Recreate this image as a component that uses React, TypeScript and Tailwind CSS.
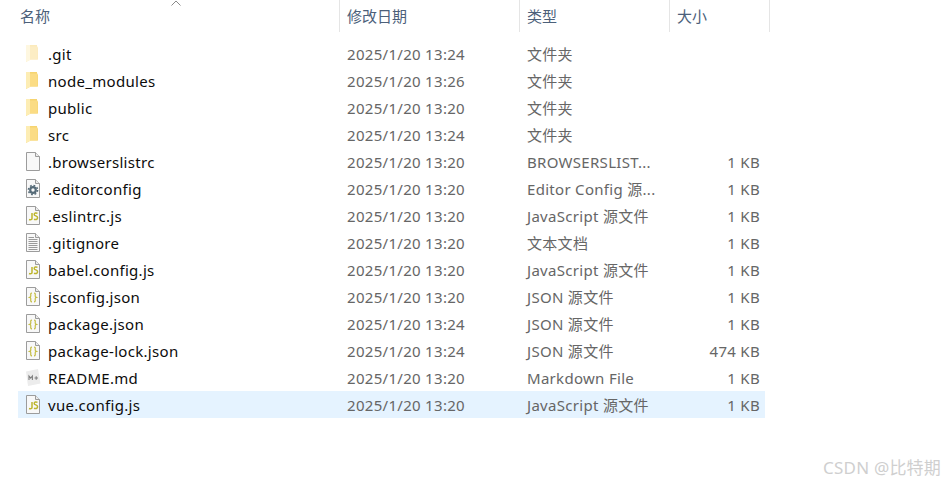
const font = "font-['Noto_Sans','Noto_Sans_CJK_SC',sans-serif]";

type Kind = "folder" | "folderFaded" | "blank" | "config" | "js" | "text" | "json" | "md";

interface FileRow {
  name: string;
  date: string;
  type: string;
  size: string;
  kind: Kind;
  selected?: boolean;
}

const rows: FileRow[] = [
  { name: ".git", date: "2025/1/20 13:24", type: "文件夹", size: "", kind: "folderFaded" },
  { name: "node_modules", date: "2025/1/20 13:26", type: "文件夹", size: "", kind: "folder" },
  { name: "public", date: "2025/1/20 13:20", type: "文件夹", size: "", kind: "folder" },
  { name: "src", date: "2025/1/20 13:24", type: "文件夹", size: "", kind: "folder" },
  { name: ".browserslistrc", date: "2025/1/20 13:20", type: "BROWSERSLIST...", size: "1 KB", kind: "blank" },
  { name: ".editorconfig", date: "2025/1/20 13:20", type: "Editor Config 源...", size: "1 KB", kind: "config" },
  { name: ".eslintrc.js", date: "2025/1/20 13:20", type: "JavaScript 源文件", size: "1 KB", kind: "js" },
  { name: ".gitignore", date: "2025/1/20 13:20", type: "文本文档", size: "1 KB", kind: "text" },
  { name: "babel.config.js", date: "2025/1/20 13:20", type: "JavaScript 源文件", size: "1 KB", kind: "js" },
  { name: "jsconfig.json", date: "2025/1/20 13:20", type: "JSON 源文件", size: "1 KB", kind: "json" },
  { name: "package.json", date: "2025/1/20 13:24", type: "JSON 源文件", size: "1 KB", kind: "json" },
  { name: "package-lock.json", date: "2025/1/20 13:24", type: "JSON 源文件", size: "474 KB", kind: "json" },
  { name: "README.md", date: "2025/1/20 13:20", type: "Markdown File", size: "1 KB", kind: "md" },
  { name: "vue.config.js", date: "2025/1/20 13:20", type: "JavaScript 源文件", size: "1 KB", kind: "js", selected: true },
];

const Sheet = ({ children }: { children?: React.ReactNode }) => (
  <svg width="16" height="19" viewBox="0 0 16 19" fill="none">
    <path d="M1.5 0.5H10.5L14.5 4.5V18.5H1.5Z" fill="#f8f8f8" stroke="#9c9c9c" />
    <path d="M10.5 0.5V4.5H14.5" fill="#ececec" stroke="#9c9c9c" />
    {children}
  </svg>
);

const FileIcon = ({ kind }: { kind: Kind }) => {
  if (kind === "folder" || kind === "folderFaded") {
    const faded = kind === "folderFaded";
    return (
      <svg width="16" height="19" viewBox="0 0 16 19">
        <path d="M1 1H12V2.5L13 4V15.5H5.5L1 18Z" fill={faded ? "#fbeabb" : "#f6d470"} />
        <path d="M5 2.5H12.5V15.5H5Z" fill={faded ? "#fcedc4" : "#fbdc84"} />
        <path d="M1 1H5V16L1 18Z" fill={faded ? "#fef7e0" : "#fdedb4"} />
      </svg>
    );
  }
  if (kind === "blank") return <Sheet />;
  if (kind === "config") {
    return (
      <Sheet>
        <circle cx="8" cy="11" r="2.8" fill="none" stroke="#566b78" strokeWidth="2.2" />
        <circle cx="8" cy="11" r="4.6" fill="none" stroke="#566b78" strokeWidth="1.5" strokeDasharray="1.8 1.8" />
      </Sheet>
    );
  }
  if (kind === "js") {
    return (
      <Sheet>
        <path d="M7 7V12.5C7 13.7 5.6 14 4 13.5" stroke="#bdb52e" strokeWidth="1.5" />
        <path d="M12.5 7.4C11.2 6.7 9.2 6.9 9.2 8.4C9.2 10.2 12.6 9.6 12.6 11.8C12.6 13.7 10.6 13.9 9 13.2" stroke="#bdb52e" strokeWidth="1.5" />
      </Sheet>
    );
  }
  if (kind === "json") {
    return (
      <Sheet>
        <path d="M7 6C5.2 6 5.8 8 5.8 9C5.8 10 4.6 10.4 4.6 10.4C4.6 10.4 5.8 10.8 5.8 11.8C5.8 12.8 5.2 14.8 7 14.8" stroke="#c4bd45" strokeWidth="1.2" />
        <path d="M9 6C10.8 6 10.2 8 10.2 9C10.2 10 11.4 10.4 11.4 10.4C11.4 10.4 10.2 10.8 10.2 11.8C10.2 12.8 10.8 14.8 9 14.8" stroke="#c4bd45" strokeWidth="1.2" />
      </Sheet>
    );
  }
  if (kind === "text") {
    return (
      <Sheet>
        <path d="M3.5 4.5H9M3.5 6.5H12.5M3.5 8.5H12.5M3.5 10.5H12.5M3.5 12.5H12.5M3.5 14.5H12.5M3.5 16.5H12.5" stroke="#9a9a9a" />
      </Sheet>
    );
  }
  return (
    <svg width="16" height="19" viewBox="0 0 16 19">
      <path d="M1 3.5L13 1L15.5 15.5L3 18Z" fill="#ececec" />
      <path d="M4 12V8L5.7 10.2L7.4 8V12M9.5 10H13M11.2 8.2V11.8" fill="none" stroke="#7f7f7f" strokeWidth="1.1" />
    </svg>
  );
};

const Row = ({ row }: { row: FileRow }) => (
  <div className={`flex h-[27px] w-[747px] items-center tracking-[0.3px] ${row.selected ? "bg-[#e5f3ff]" : ""}`}>
    <div className="flex w-[321px] items-center">
      <div className="ml-[7px] mr-[7px] flex w-[16px] justify-center">
        <FileIcon kind={row.kind} />
      </div>
      <span className="text-[#0c0c0c]">{row.name}</span>
    </div>
    <div className="w-[180px] pl-[8px] text-[#666666]">{row.date}</div>
    <div className="w-[150px] pl-[8px] text-[#666666] whitespace-nowrap">{row.type}</div>
    <div className="w-[91px] text-right text-[#666666]">{row.size}</div>
  </div>
);

const HeaderCell = ({ label, width, sorted }: { label: string; width: string; sorted?: boolean }) => (
  <div className={`relative flex h-full items-center border-r border-[#e5e5e5] pl-[7px] pb-px text-[#4c607a] ${width}`}>
    {sorted && (
      <svg className="absolute left-[158px] top-0" width="10" height="6" viewBox="0 0 10 6" fill="none">
        <path d="M0.5 5.5L5 1L9.5 5.5" stroke="#8a8a8a" />
      </svg>
    )}
    {label}
  </div>
);

export default function App() {
  return (
    <div className={`relative h-[482px] w-[945px] overflow-hidden bg-white text-[15px] leading-[20px] ${font}`}>
      <div className="ml-[13px] flex h-[32px]">
        <HeaderCell label="名称" width="w-[327px]" sorted />
        <HeaderCell label="修改日期" width="w-[180px]" />
        <HeaderCell label="类型" width="w-[150px]" />
        <HeaderCell label="大小" width="w-[100px]" />
      </div>
      <div className="ml-[18px] mt-[8px] flex flex-col">
        {rows.map((row) => (
          <Row key={row.name} row={row} />
        ))}
      </div>
      <div className="absolute bottom-[4px] right-[4px] text-[17px] tracking-[0.2px] text-[#cfcfcf]">CSDN @比特期</div>
    </div>
  );
}
